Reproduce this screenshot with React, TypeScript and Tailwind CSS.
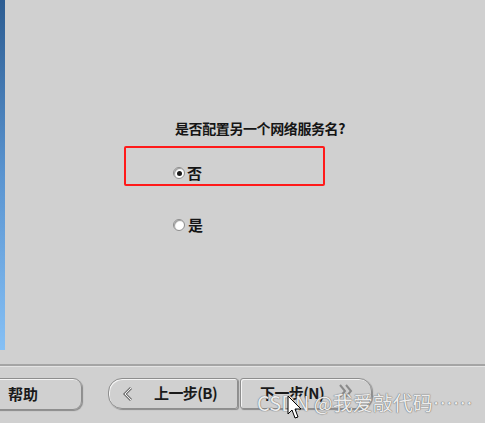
import React from "react";

const cjk = "font-['SimSun','Noto_Sans_CJK_SC',sans-serif]";

const Radio = ({ checked }: { checked?: boolean }) => (
  <span className="w-[12px] h-[12px] rounded-full border border-[#8c8c8c] bg-white shadow-[inset_1px_1px_1px_#9a9a9a] flex items-center justify-center">
    {checked && <span className="w-[5px] h-[5px] rounded-full bg-[#1a1a1a]" />}
  </span>
);

const App = () => {
  return (
    <div className={`relative w-[485px] h-[423px] bg-[#d0d0d0] flex flex-col overflow-hidden ${cjk}`}>
      <div className="flex h-[364px]">
        <div className="w-[5px] h-[350px] bg-gradient-to-b from-[#2d5d92] via-[#5a94d0] to-[#86c0f5]" />
        <div className="flex flex-col pl-[119px] pt-[118px]">
          <p className="pl-[51px] text-[14px] leading-[20px] font-bold text-[#151515] tracking-[-0.4px]">
            是否配置另一个网络服务名?
          </p>
          <div className="mt-[8px] w-[201px] h-[40px] border-2 border-[#ff1a1a] rounded-[2px] flex items-end pb-[1px] pl-[47px]">
            <label className="flex items-center gap-[2px] text-[15px] leading-[20px] font-bold text-[#151515]">
              <Radio checked />
              否
            </label>
          </div>
          <label className="mt-[29px] pl-[49px] flex items-center gap-[3px] text-[15px] leading-[20px] font-bold text-[#151515]">
            <Radio />
            是
          </label>
        </div>
      </div>
      <div className="h-[2px] bg-[#a4a4a4]" />
      <div className="h-[1px] bg-[#e4e4e4]" />
      <div className="flex items-start pt-[11px]">
        <div className="ml-[-12px] w-[94px] h-[32px] rounded-[9px] border border-[#8e8e8e] shadow-[inset_1px_1px_0_#f4f4f4,1px_1px_1px_#8a8a8a] flex items-center pl-[19px] text-[15px] font-bold text-[#1a1a1a]">
          帮助
        </div>
        <div className="ml-[26px] w-[130px] h-[31px] rounded-l-[14px] rounded-r-[3px] border border-[#8e8e8e] shadow-[inset_1px_1px_0_#f4f4f4,1px_1px_1px_#8a8a8a] flex items-center pl-[13px] text-[15px] font-bold text-[#1a1a1a]">
          <svg width="12" height="14" viewBox="0 0 12 14">
            <path d="M9 1 L3 7 L9 13" fill="none" stroke="#777" strokeWidth="3" />
            <path d="M9 1 L3 7 L9 13" fill="none" stroke="#f2f2f2" strokeWidth="1" />
          </svg>
          <span className="ml-[20px] tracking-[-0.6px]">上一步(B)</span>
        </div>
        <div className="ml-[2px] w-[132px] h-[31px] rounded-l-[3px] rounded-r-[13px] border border-[#8e8e8e] shadow-[inset_1px_1px_0_#f4f4f4,1px_1px_1px_#8a8a8a] flex items-center pl-[19px] text-[15px] font-bold text-[#1a1a1a]">
          <span className="tracking-[-0.6px]">下一步(N)</span>
          <svg className="ml-[14px] -mt-[6px]" width="16" height="14" viewBox="0 0 16 14">
            <path d="M2 1 L7 7 L2 13 M8 1 L13 7 L8 13" fill="none" stroke="#8a8a8a" strokeWidth="2" />
          </svg>
        </div>
      </div>
      <div className="absolute left-[257px] top-[390px] text-[20px] leading-[26px] text-[#ececec] [text-shadow:0_0_1px_#6a6a6a,0_0_1px_#6a6a6a] font-['Noto_Sans_CJK_SC',sans-serif] whitespace-nowrap">
        CSDN @我爱敲代码……
      </div>
      <svg className="absolute left-[287px] top-[395px]" width="16" height="26" viewBox="0 0 16 26">
        <path d="M1 1 L1 19 L5 15 L8 23 L11 22 L8 14 L14 14 Z" fill="#fff" stroke="#000" strokeWidth="1" />
      </svg>
    </div>
  );
};

export default App;
